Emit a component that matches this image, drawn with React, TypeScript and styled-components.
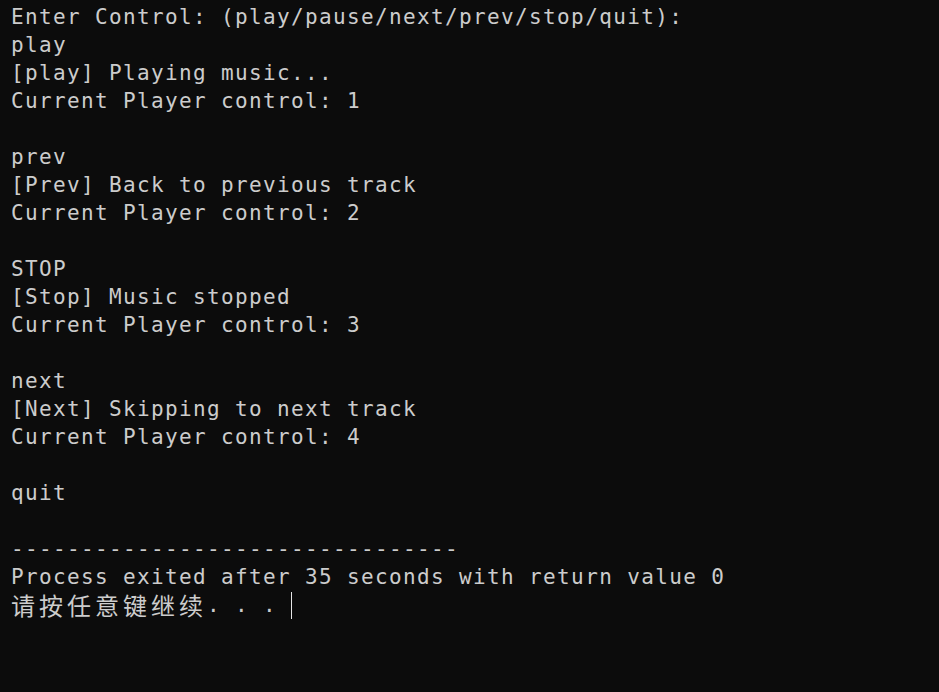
import React from "react";
import styled, { createGlobalStyle } from "styled-components";

const Global = createGlobalStyle`
  html, body { margin: 0; padding: 0; background: #0c0c0c; }
  #root { min-height: 100vh; }
`;

const Terminal = styled.div`
  box-sizing: border-box;
  width: 939px;
  height: 692px;
  overflow: hidden;
  background: #0c0c0c;
  color: #cccccc;
  padding: 3px 0 0 11px;
  font-family: "DejaVu Sans Mono", "Liberation Mono", monospace;
  font-size: 21px;
  letter-spacing: 1.36px;
  display: flex;
  flex-direction: column;
`;

const Line = styled.div`
  height: 28px;
  line-height: 28px;
  white-space: pre;
  display: flex;
  align-items: center;
`;

const Cjk = styled.span`
  font-family: "Noto Sans CJK SC", sans-serif;
  font-size: 24px;
  letter-spacing: 4px;
  line-height: 28px;
`;

const Cursor = styled.span`
  display: inline-block;
  width: 1px;
  height: 27px;
  background: #e6e6e6;
`;

const lines = [
  "Enter Control: (play/pause/next/prev/stop/quit):",
  "play",
  "[play] Playing music...",
  "Current Player control: 1",
  "",
  "prev",
  "[Prev] Back to previous track",
  "Current Player control: 2",
  "",
  "STOP",
  "[Stop] Music stopped",
  "Current Player control: 3",
  "",
  "next",
  "[Next] Skipping to next track",
  "Current Player control: 4",
  "",
  "quit",
  "",
  "--------------------------------",
  "Process exited after 35 seconds with return value 0",
];

export default function App() {
  return (
    <>
      <Global />
      <Terminal>
        {lines.map((l, i) => (
          <Line key={i}>{l}</Line>
        ))}
        <Line>
          <Cjk>请按任意键继续</Cjk>
          {". . . "}
          <Cursor />
        </Line>
      </Terminal>
    </>
  );
}
